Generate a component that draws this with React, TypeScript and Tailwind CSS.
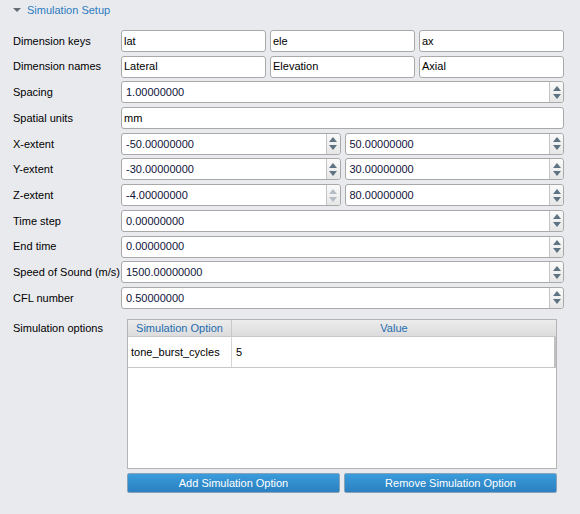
import React from "react";

const font = { fontFamily: "'Liberation Sans', Arial, sans-serif" };

function Spin({ disabled = false }: { disabled?: boolean }) {
  const c = disabled ? "#b4bcc4" : "#5d7384";
  return (
    <div className="flex w-[14px] flex-col items-center justify-center gap-[3px] border-l border-[#c4c4c4] bg-gradient-to-b from-[#fafafa] to-[#e6e6e6] rounded-r-[3px]">
      <svg width="8" height="5" viewBox="0 0 8 5"><path d="M0 5 L4 0 L8 5 Z" fill={c} /></svg>
      <svg width="8" height="5" viewBox="0 0 8 5"><path d="M0 0 L4 5 L8 0 Z" fill={c} /></svg>
    </div>
  );
}

function Field({ value = "", spin = false, disabled = false, num = false }: { value?: string; spin?: boolean; disabled?: boolean; num?: boolean }) {
  return (
    <div className="flex h-[22px] min-w-0 flex-1 rounded-[3px] border border-[#a9a9a9] bg-white">
      <div className={`flex min-w-0 flex-1 items-center whitespace-nowrap text-[11px] ${num ? "pl-[4px] text-[#10143a]" : "pl-[2px] text-black"}`}>{value}</div>
      {spin && <Spin disabled={disabled} />}
    </div>
  );
}

function Row({ label, children }: { label: string; children: React.ReactNode }) {
  return (
    <div className="flex h-[22px] items-center">
      <div className="w-[108px] shrink-0 whitespace-nowrap text-[11px] text-black">{label}</div>
      <div className="flex min-w-0 flex-1 gap-[4px]">{children}</div>
    </div>
  );
}

export default function App() {
  return (
    <div className="h-[514px] w-[580px] overflow-hidden bg-[#e9eaee]" style={font}>
      <div className="flex h-[20px] items-center pl-[13px]">
        <svg width="8" height="5" viewBox="0 0 8 5" className="mr-[6px]"><path d="M0 0 L8 0 L4 4 Z" fill="#666c74" /></svg>
        <span className="text-[11px] text-[#2c7cc0]">Simulation Setup</span>
      </div>
      <div className="flex flex-col gap-y-[3.7px] pl-[13px] pr-[16px] pt-[10px]">
        <Row label="Dimension keys">
          <Field value="lat" />
          <Field value="ele" />
          <Field value="ax" />
        </Row>
        <Row label="Dimension names">
          <Field value="Lateral" />
          <Field value="Elevation" />
          <Field value="Axial" />
        </Row>
        <Row label="Spacing">
          <Field value="1.00000000" spin num />
        </Row>
        <Row label="Spatial units">
          <Field value="mm" />
        </Row>
        <Row label="X-extent">
          <Field value="-50.00000000" spin num />
          <Field value="50.00000000" spin num />
        </Row>
        <Row label="Y-extent">
          <Field value="-30.00000000" spin num />
          <Field value="30.00000000" spin num />
        </Row>
        <Row label="Z-extent">
          <Field value="-4.00000000" spin disabled num />
          <Field value="80.00000000" spin num />
        </Row>
        <Row label="Time step">
          <Field value="0.00000000" spin num />
        </Row>
        <Row label="End time">
          <Field value="0.00000000" spin num />
        </Row>
        <Row label="Speed of Sound (m/s)">
          <Field value="1500.00000000" spin num />
        </Row>
        <Row label="CFL number">
          <Field value="0.50000000" spin num />
        </Row>
      </div>
      <div className="mt-[10px] flex pl-[13px] pr-[23px]">
        <div className="w-[114px] shrink-0 whitespace-nowrap pt-[1px] text-[11px] text-black">Simulation options</div>
        <div className="flex min-w-0 flex-1 flex-col">
          <div className="flex h-[150px] flex-col border border-[#b4b4b4] bg-white">
            <div className="flex h-[17px] bg-gradient-to-b from-[#ececec] to-[#dcdcdc] border-b border-[#c8c8c8] text-[11px] text-[#1f6cae]">
              <div className="flex w-[104px] items-center justify-center whitespace-nowrap border-r border-[#c8c8c8]">Simulation Option</div>
              <div className="flex flex-1 items-center justify-center">Value</div>
            </div>
            <div className="flex h-[31px] border-b border-[#c8c8c8] border-r-2 border-r-[#c0c0c0] text-[11px] text-black">
              <div className="flex w-[104px] items-center whitespace-nowrap border-r border-[#d4d4d4] pl-[3px]">tone_burst_cycles</div>
              <div className="flex flex-1 items-center pl-[4px]">5</div>
            </div>
          </div>
          <div className="mt-[4px] flex gap-[4px]">
            <button className="h-[20px] flex-1 rounded-[2px] border border-[#8aa2b8] bg-gradient-to-b from-[#3a9cdc] to-[#2b80c0] text-[11px] text-white">Add Simulation Option</button>
            <button className="h-[20px] flex-1 rounded-[2px] border border-[#8aa2b8] bg-gradient-to-b from-[#3a9cdc] to-[#2b80c0] text-[11px] text-white">Remove Simulation Option</button>
          </div>
        </div>
      </div>
    </div>
  );
}
